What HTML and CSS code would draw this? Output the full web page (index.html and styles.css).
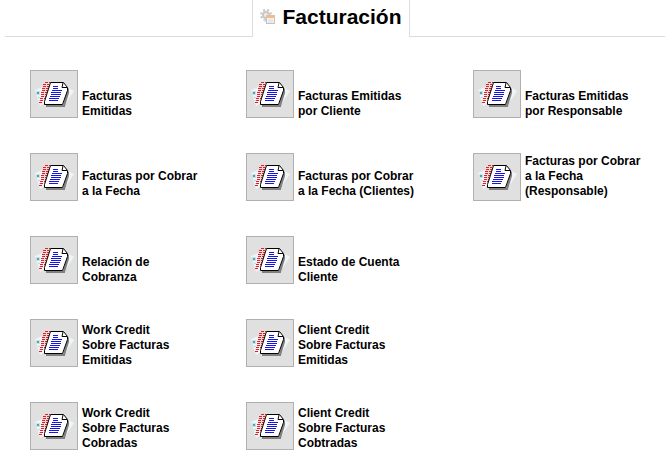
FILE: index.html
```html
<!DOCTYPE html>
<html lang="es">
<head>
    <meta charset="UTF-8">
    <meta name="viewport" content="width=device-width, initial-scale=1.0">
    <title>Facturación</title>
    <link rel="stylesheet" href="styles.css">
</head>
<body>
    <!-- Report icon, shared by every entry of the menu -->
    <svg class="sprite" aria-hidden="true">
        <symbol id="report" viewBox="0 0 46 46">
            <path d="M4 19l7-3 3 16-5 3zM36 16l7 4-8 12z" fill="#eff5f6"/>
            <path d="M5 20h4v4H5z" fill="#c5e4e4"/>
            <path d="M6 21h2v2H6z" fill="#4ba3b5"/>
            <path d="M7 26h2v1H7zM8 29h2v1H8z" fill="#b5dede"/>
            <path d="M14 11.500h5M12 13.500h6M12 15.500h6M11 17.500h6M11 19.500h6M10 21.500h6M10 23.500h5M10 25.500h5M9 27.500h5M9 29.500h4M8 31.500h4" stroke="#f01820" stroke-dasharray="3 1"/>
            <path d="M37 17l1 1v4l-4 13v1H15v-2h17z" fill="#808080"/>
            <path d="M19.500 11.500h13l4 5v3l-5 14h-18v-3z" fill="#fff" stroke="#000"/>
            <path d="M32 12l-1 4.500h5" fill="none" stroke="#000"/>
            <path d="M22 15.500h5M22 17.500h5M21 19.500h10M20 21.500h10M20 23.500h10M19 25.500h10M18 27.500h10M18 29.500h9" stroke="#1414e6"/>
        </symbol>
    </svg>

    <header class="header">
        <div class="title-tab">
            <svg class="title-icon" viewBox="0 0 16 16" aria-hidden="true">
                <circle cx="6" cy="6" r="5" fill="none" stroke="#c8c8c8" stroke-width="2" stroke-dasharray="2 2"/>
                <circle cx="6" cy="6" r="3" fill="#eee" stroke="#c8c8c8" stroke-width="2"/>
                <path d="M3 10h4v3H5z" fill="#d4d4d4"/>
                <rect x="6.500" y="6.500" width="8" height="8" fill="#f3f3f3" stroke="#c8c2bd"/>
                <path d="M6 6h9v3H6z" fill="#f0bd90"/>
                <path d="M8 11h5M8 13h5" stroke="#ddd"/>
            </svg>
            <h1>Facturación</h1>
        </div>
    </header>

    <main class="menu">
        <a class="item" href="#">
            <svg class="item-icon"><use href="#report"/></svg>
            <span>Facturas<br>Emitidas</span>
        </a>
        <a class="item" href="#">
            <svg class="item-icon"><use href="#report"/></svg>
            <span>Facturas Emitidas<br>por Cliente</span>
        </a>
        <a class="item" href="#">
            <svg class="item-icon"><use href="#report"/></svg>
            <span>Facturas Emitidas<br>por Responsable</span>
        </a>

        <a class="item raised" href="#">
            <svg class="item-icon"><use href="#report"/></svg>
            <span>Facturas por Cobrar<br>a la Fecha</span>
        </a>
        <a class="item raised" href="#">
            <svg class="item-icon"><use href="#report"/></svg>
            <span>Facturas por Cobrar<br>a la Fecha (Clientes)</span>
        </a>
        <a class="item raised" href="#">
            <svg class="item-icon"><use href="#report"/></svg>
            <span>Facturas por Cobrar<br>a la Fecha<br>(Responsable)</span>
        </a>

        <a class="item first" href="#">
            <svg class="item-icon"><use href="#report"/></svg>
            <span>Relación de<br>Cobranza</span>
        </a>
        <a class="item" href="#">
            <svg class="item-icon"><use href="#report"/></svg>
            <span>Estado de Cuenta<br>Cliente</span>
        </a>

        <a class="item first" href="#">
            <svg class="item-icon"><use href="#report"/></svg>
            <span>Work Credit<br>Sobre Facturas<br>Emitidas</span>
        </a>
        <a class="item" href="#">
            <svg class="item-icon"><use href="#report"/></svg>
            <span>Client Credit<br>Sobre Facturas<br>Emitidas</span>
        </a>

        <a class="item first" href="#">
            <svg class="item-icon"><use href="#report"/></svg>
            <span>Work Credit<br>Sobre Facturas<br>Cobradas</span>
        </a>
        <a class="item" href="#">
            <svg class="item-icon"><use href="#report"/></svg>
            <span>Client Credit<br>Sobre Facturas<br>Cobtradas</span>
        </a>
    </main>
</body>
</html>
```
FILE: styles.css
```css
* {
    box-sizing: border-box;
}

body {
    margin: 0;
    background: #fff;
    color: #000;
    font-family: "Liberation Sans", Arial, sans-serif;
}

.sprite {
    display: none;
}

/* The rule under the header is broken by the open title tab */
.header {
    display: flex;
    padding: 0 5px;
}

.header::before,
.header::after {
    content: "";
    flex: 247;
    border-bottom: 1px solid #dcdcdc;
}

.header::after {
    flex: 255;
}

.title-tab {
    display: flex;
    align-items: center;
    gap: 6px;
    height: 37px;
    padding: 0 7px 4px;
    border: solid #dcdcdc;
    border-width: 0 1px;
}

.title-icon {
    width: 16px;
    height: 16px;
}

h1 {
    margin: 0;
    font-size: 21px;
    line-height: 24px;
}

.menu {
    display: grid;
    grid-template-columns: 216fr 227fr 197fr;
    row-gap: 34px;
    padding: 33px 0 18px 30px;
}

.item {
    display: flex;
    align-items: flex-end;
    gap: 4px;
    color: #000;
    font-size: 12px;
    font-weight: bold;
    line-height: 15px;
    text-decoration: none;
}

.item.first {
    grid-column: 1;
}

.item.raised span {
    padding-bottom: 3px;
}

.item-icon {
    flex: none;
    width: 48px;
    height: 48px;
    margin-bottom: 1px;
    background: #e0e0e0;
    border: 1px solid #b0b0b0;
}
```
